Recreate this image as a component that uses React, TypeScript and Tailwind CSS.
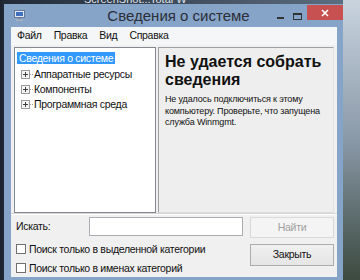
import React from 'react';

const ui = { fontFamily: '"Liberation Sans", Arial, sans-serif' };

const Expander = () => (
  <span className="flex items-center">
    <svg width="9" height="9" viewBox="0 0 9 9">
      <rect x="0.5" y="0.5" width="8" height="8" fill="#f4f4f4" stroke="#9a9a9a" />
      <path d="M2 4.5h5M4.5 2v5" stroke="#404040" />
    </svg>
    <span className="w-[3px] border-t border-dotted border-[#a0a0a0]" />
  </span>
);

const TreeRow = ({ label }: { label: string }) => (
  <div className="flex items-center h-[15px] pl-[6px] text-[10.5px] tracking-[-0.3px] text-[#111] whitespace-nowrap">
    <Expander />
    <span className="leading-none pl-[1px]">{label}</span>
  </div>
);

const Checkbox = ({ label }: { label: string }) => (
  <label className="flex items-center gap-[3px] text-[10.5px] tracking-[-0.3px] text-[#111] leading-none whitespace-nowrap">
    <span className="w-[10px] h-[10px] bg-white border border-[#707070]" />
    {label}
  </label>
);

const App = () => {
  return (
    <div
      className="relative w-[360px] h-[280px] overflow-hidden pl-[4px] pt-[4px]"
      style={{
        ...ui,
        background:
          'linear-gradient(90deg, #1c2230 0px, #222a38 4px, #5b6d80 343px, #8ea2b6 350px, #6f7f86 360px)',
      }}
    >
      <div className="absolute top-[-9px] left-[84px] text-[11px] text-[#dfe3ea]">ScreenShot...</div>
      <div className="absolute top-[-9px] left-[150px] text-[11px] text-[#dfe3ea]">Total W</div>
      <div className="absolute right-0 top-0 w-[17px] h-[280px] bg-gradient-to-b from-[#c9d4df] via-[#8a99a8] to-[#3c4a40]" />

      <div className="relative w-[339px] h-[276px] pb-[3px] bg-[#86a3c8] flex flex-col">
        <div className="h-[23px] flex items-start">
          <div className="ml-[10px] mt-[6px]">
            <svg width="11" height="11" viewBox="0 0 11 11">
              <rect x="0.5" y="0.5" width="10" height="7" fill="#dfe8f6" stroke="#6a7a94" />
              <rect x="2" y="2" width="7" height="4" fill="#3f6fc0" />
              <rect x="4" y="8" width="3" height="1.5" fill="#7a8aa0" />
              <rect x="2" y="9.5" width="7" height="1.5" fill="#a8b4c6" />
            </svg>
          </div>
          <div className="flex-1 text-center pl-[60px] pt-[2px] text-[15px] text-[#2a2f38] leading-[20px] whitespace-nowrap">
            Сведения о системе
          </div>
          <div className="flex items-start">
            <div className="w-[16px] h-[16px] flex items-center justify-center mt-[4px]">
              <span className="w-[7px] h-[2px] bg-[#333] mt-[4px]" />
            </div>
            <div className="w-[16px] h-[16px] flex items-center justify-center mt-[4px] ml-[1px]">
              <span className="w-[9px] h-[7px] border border-[#333] border-t-2" />
            </div>
            <div className="w-[36px] h-[15px] bg-[#c75050] flex items-center justify-center ml-[2px] mt-[1px]">
              <svg width="8" height="8" viewBox="0 0 8 8">
                <path d="M1 1l6 6M7 1l-6 6" stroke="#fff" strokeWidth="1.6" />
              </svg>
            </div>
          </div>
        </div>

        <div className="ml-[7px] w-[326px] flex-1 bg-[#f0f0f0] flex flex-col">
          <div className="h-[18px] bg-[#f5f6f7] flex items-center gap-[12px] pl-[6px] text-[10.5px] tracking-[-0.3px] text-[#111]">
            <span>Файл</span>
            <span>Правка</span>
            <span>Вид</span>
            <span>Справка</span>
          </div>

          <div className="flex gap-[2px] pl-[3px] pt-[2px] h-[168px]">
            <div className="w-[142px] h-[166px] bg-white border border-[#828790] pt-[4px]">
              <div className="flex items-center h-[12px] ml-[2px] mb-[3px] w-fit px-[2px] bg-[#3399ff] text-white text-[10.5px] tracking-[-0.3px] leading-none whitespace-nowrap">
                Сведения о системе
              </div>
              <TreeRow label="Аппаратные ресурсы" />
              <TreeRow label="Компоненты" />
              <TreeRow label="Программная среда" />
            </div>
            <div className="w-[176px] h-[166px] bg-[#eeeeee] border border-[#a0a0a0] border-r-[#e3e3e3] border-b-[#dcdcdc] pl-[6px] pt-[5px]">
              <div className="text-[16px] font-bold leading-[18px] text-[#111] whitespace-nowrap">
                Не удается собрать
                <br />
                сведения
              </div>
              <div className="mt-[5px] text-[9px] tracking-[-0.15px] leading-[11.5px] text-[#111] whitespace-nowrap">
                Не удалось подключиться к этому
                <br />
                компьютеру. Проверьте, что запущена
                <br />
                служба Winmgmt.
              </div>
            </div>
          </div>

          <div className="border-t border-[#d5d5d5] border-b border-b-white h-[2px]" />

          <div className="flex pl-[5px] pr-[3px] pt-[2px]">
            <div className="flex-1 flex flex-col">
              <div className="flex items-center h-[19px]">
                <span className="w-[73px] text-[10.5px] tracking-[-0.3px] text-[#111]">Искать:</span>
                <div className="w-[154px] h-[19px] bg-white border border-[#abadb3]" />
              </div>
              <div className="mt-[8px] flex flex-col gap-[8px]">
                <Checkbox label="Поиск только в выделенной категории" />
                <Checkbox label="Поиск только в именах категорий" />
              </div>
            </div>
            <div className="flex flex-col gap-[6px] w-[84px]">
              <div className="h-[21px] border border-[#d9d9d9] bg-[#f4f4f4] flex items-center justify-center text-[10.5px] tracking-[-0.3px] text-[#a0a0a0]">
                Найти
              </div>
              <div className="h-[22px] border border-[#acacac] bg-gradient-to-b from-[#f0f0f0] to-[#e5e5e5] flex items-center justify-center text-[10.5px] tracking-[-0.3px] text-[#111]">
                Закрыть
              </div>
            </div>
          </div>
        </div>
      </div>
    </div>
  );
};

export default App;
